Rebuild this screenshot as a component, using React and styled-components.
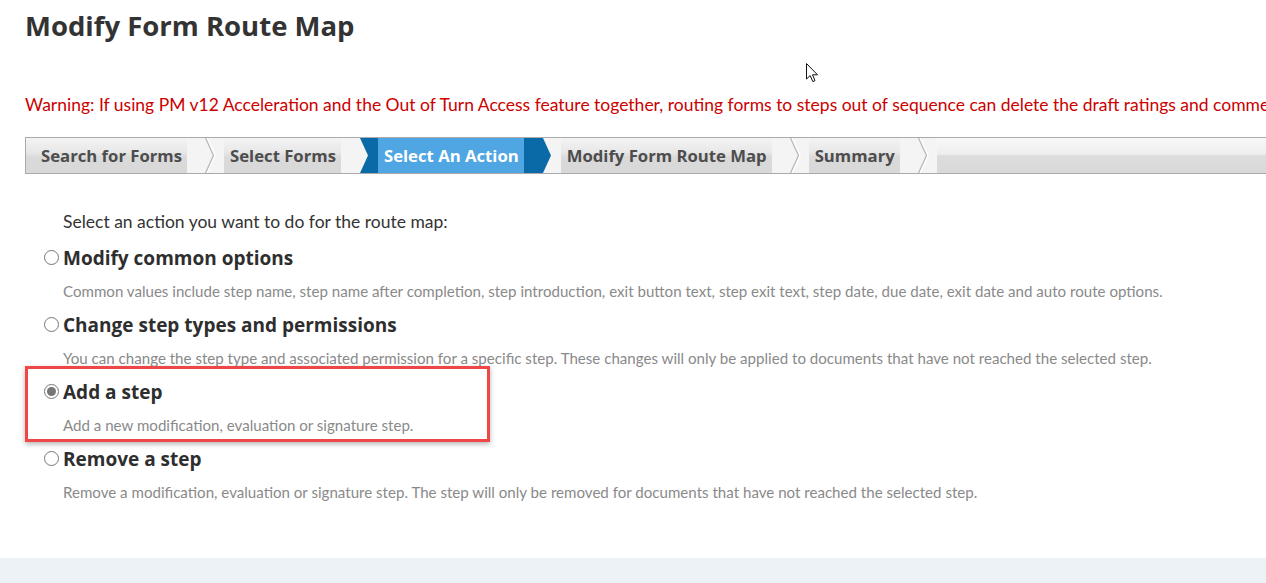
import React from "react";
import styled, { createGlobalStyle, css } from "styled-components";

const Global = createGlobalStyle`
  html, body { margin: 0; padding: 0; }
  body {
    background: #edf2f7;
    overflow: hidden;
    font-family: Lato, "Liberation Sans", sans-serif;
  }
`;

const Page = styled.div`
  position: relative;
  height: 558px;
  background: #ffffff;
  box-shadow: 0 2px 3px rgba(0, 0, 0, 0.35);
  overflow: hidden;
`;

const Inner = styled.div`
  padding: 8px 0 0 25px;
  width: 1400px;
`;

const Title = styled.h1`
  margin: 0;
  font-family: "Open Sans", sans-serif;
  font-weight: 700;
  font-size: 27.5px;
  line-height: 36px;
  color: #333333;
`;

const Warning = styled.p`
  margin: 50px 0 0;
  font-size: 17.5px;
  line-height: 22px;
  color: #cc0000;
  white-space: nowrap;
`;

const Bar = styled.div`
  margin-top: 21px;
  display: flex;
  height: 35px;
  border: 1px solid #aaaaaa;
  border-right: none;
  background: linear-gradient(#f8f8f8 0%, #eeeeee 45%, #dcdcdc 52%, #d9d9d9 100%);
`;

const Seg = styled.div`
  display: flex;
  align-items: center;
  padding: 0 5px 0 ${(p) => (p.$first ? 15 : 6)}px;
  font-family: "Open Sans", sans-serif;
  font-weight: 700;
  font-size: 16.7px;
  white-space: nowrap;
  color: ${(p) => (p.$active ? "#ffffff" : "#4d4d4d")};
  background: ${(p) =>
    p.$active
      ? "#4fa6e3"
      : "linear-gradient(#f3f3f3 0%, #e8e8e8 40%, #dadada 55%, #d8d8d8 100%)"};
`;

const SepSvg = styled.svg`
  display: block;
  flex: none;
`;

const LIGHT = "#f4f4f4";
const DARK = "#0a6aa7";

function Sep({ kind }) {
  return (
    <SepSvg width="37" height="35" viewBox="0 0 37 35">
      <rect x="0" y="0" width="37" height="35" fill={LIGHT} />
      {kind === "normal" && (
        <>
          <polyline points="20,0 28,17.5 20,35" fill="none" stroke="#ffffff" strokeWidth="1.5" />
          <polyline points="18.5,0 26.5,17.5 18.5,35" fill="none" stroke="#b9b9b9" strokeWidth="1.3" />
        </>
      )}
      {kind === "before" && (
        <>
          <rect x="19" y="0" width="18" height="35" fill={DARK} />
          <polygon points="19,0 27,17.5 19,35" fill={LIGHT} />
        </>
      )}
      {kind === "after" && (
        <polygon points="0,0 19,0 27,17.5 19,35 0,35" fill={DARK} />
      )}
    </SepSvg>
  );
}

const Actions = styled.div`
  margin-top: 37px;
  padding-left: 19px;
`;

const Instruction = styled.p`
  margin: 0 0 12px 19px;
  font-size: 17.5px;
  line-height: 22px;
  color: #333333;
`;

const Option = styled.div`
  position: relative;
  margin-bottom: 11px;
`;

const LabelRow = styled.label`
  display: flex;
  align-items: center;
  gap: 4px;
  height: 26px;
  font-family: "Open Sans", sans-serif;
  font-size: 19px;
  font-weight: 700;
  color: #2e2e2e;
`;

const Radio = styled.span`
  position: relative;
  flex: none;
  width: 13px;
  height: 13px;
  margin-top: -2px;
  border: 1px solid #767676;
  border-radius: 50%;
  background: #fff;
  ${(p) =>
    p.$checked &&
    css`
      &::after {
        content: "";
        position: absolute;
        left: 2px;
        top: 2px;
        width: 9px;
        height: 9px;
        border-radius: 50%;
        background: #767676;
      }
    `}
`;

const Desc = styled.p`
  margin: 10px 0 0 19px;
  font-size: 15.1px;
  line-height: 20px;
  color: #8a8a8a;
  white-space: nowrap;
`;

const Highlight = styled.div`
  position: absolute;
  left: -19px;
  top: -13px;
  width: 465px;
  height: 76px;
  box-sizing: border-box;
  border: 3px solid #ef4646;
  box-shadow: 0 2px 5px rgba(0, 0, 0, 0.3);
  pointer-events: none;
`;

const Cursor = styled.svg`
  position: absolute;
  left: 806px;
  top: 63px;
`;

const options = [
  {
    label: "Modify common options",
    desc: "Common values include step name, step name after completion, step introduction, exit button text, step exit text, step date, due date, exit date and auto route options.",
  },
  {
    label: "Change step types and permissions",
    desc: "You can change the step type and associated permission for a specific step. These changes will only be applied to documents that have not reached the selected step.",
  },
  {
    label: "Add a step",
    desc: "Add a new modification, evaluation or signature step.",
    checked: true,
  },
  {
    label: "Remove a step",
    desc: "Remove a modification, evaluation or signature step. The step will only be removed for documents that have not reached the selected step.",
  },
];

export default function App() {
  return (
    <>
      <Global />
      <Page>
        <Inner>
          <Title>Modify Form Route Map</Title>
          <Warning>
            Warning: If using PM v12 Acceleration and the Out of Turn Access feature together, routing forms to steps out of sequence can delete the draft ratings and comments
          </Warning>
          <Bar>
            <Seg $first>Search for Forms</Seg>
            <Sep kind="normal" />
            <Seg>Select Forms</Seg>
            <Sep kind="before" />
            <Seg $active>Select An Action</Seg>
            <Sep kind="after" />
            <Seg>Modify Form Route Map</Seg>
            <Sep kind="normal" />
            <Seg>Summary</Seg>
            <Sep kind="normal" />
          </Bar>
          <Actions>
            <Instruction>Select an action you want to do for the route map:</Instruction>
            {options.map((o) => (
              <Option key={o.label}>
                {o.checked && <Highlight />}
                <LabelRow>
                  <Radio $checked={o.checked} />
                  {o.label}
                </LabelRow>
                <Desc>{o.desc}</Desc>
              </Option>
            ))}
          </Actions>
        </Inner>
        <Cursor width="13" height="20" viewBox="0 0 13 20">
          <path d="M0.5 0.5 L0.5 16 L4.2 12.6 L6.8 18.6 L9 17.6 L6.5 11.8 L11.5 11.8 Z" fill="#ffffff" stroke="#111111" strokeWidth="1" strokeLinejoin="round" />
        </Cursor>
      </Page>
    </>
  );
}
